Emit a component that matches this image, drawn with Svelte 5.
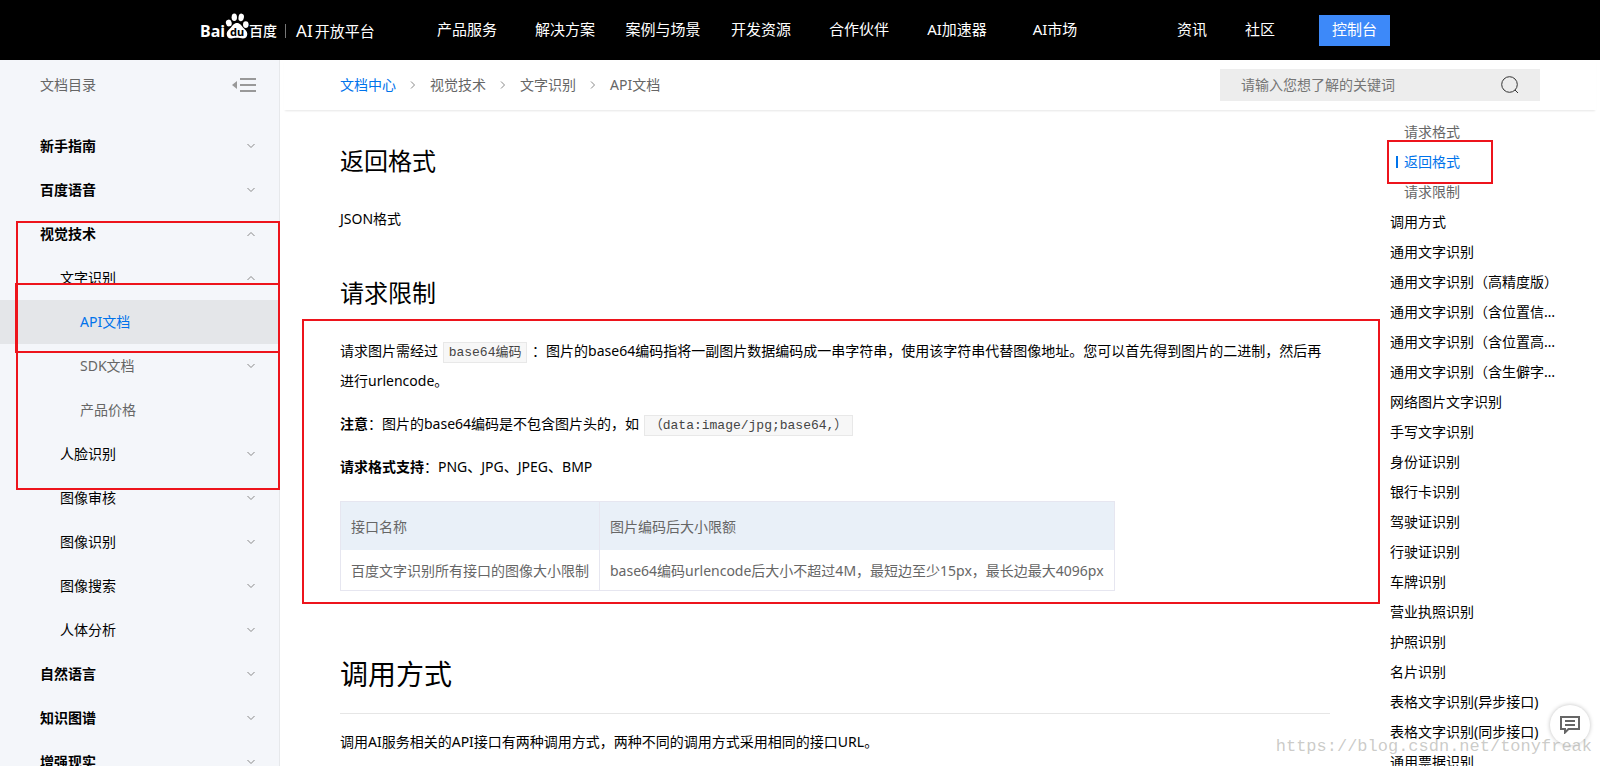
<script lang="ts">
    let keyword = '';
    const nav = ['产品服务', '解决方案', '案例与场景', '开发资源', '合作伙伴', 'AI加速器', 'AI市场'];
    const menu = [
        { name: '新手指南', level: 1, arrow: 'down' },
        { name: '百度语音', level: 1, arrow: 'down' },
        { name: '视觉技术', level: 1, arrow: 'up' },
        { name: '文字识别', level: 2, arrow: 'up' },
        { name: 'API文档', level: 3, arrow: '', active: true },
        { name: 'SDK文档', level: 3, arrow: 'down' },
        { name: '产品价格', level: 3, arrow: '' },
        { name: '人脸识别', level: 2, arrow: 'down' },
        { name: '图像审核', level: 2, arrow: 'down' },
        { name: '图像识别', level: 2, arrow: 'down' },
        { name: '图像搜索', level: 2, arrow: 'down' },
        { name: '人体分析', level: 2, arrow: 'down' },
        { name: '自然语言', level: 1, arrow: 'down' },
        { name: '知识图谱', level: 1, arrow: 'down' },
        { name: '增强现实', level: 1, arrow: 'down' }
    ];
    const crumbs = ['文档中心', '视觉技术', '文字识别', 'API文档'];
    const toc = [
        { name: '请求格式', sub: true },
        { name: '返回格式', sub: true, active: true },
        { name: '请求限制', sub: true },
        { name: '调用方式' },
        { name: '通用文字识别' },
        { name: '通用文字识别（高精度版）' },
        { name: '通用文字识别（含位置信息版）' },
        { name: '通用文字识别（含位置高精度版）' },
        { name: '通用文字识别（含生僻字版）' },
        { name: '网络图片文字识别' },
        { name: '手写文字识别' },
        { name: '身份证识别' },
        { name: '银行卡识别' },
        { name: '驾驶证识别' },
        { name: '行驶证识别' },
        { name: '车牌识别' },
        { name: '营业执照识别' },
        { name: '护照识别' },
        { name: '名片识别' },
        { name: '表格文字识别(异步接口)' },
        { name: '表格文字识别(同步接口)' },
        { name: '通用票据识别' }
    ];
</script>

<div class="page" lang="zh-CN">
    <header>
        <div class="inner">
            <a class="logo" href="#home">
                <span class="bai">Bai</span>
                <svg class="paw" width="24" height="26" viewBox="0 0 24 26">
                    <ellipse cx="3.8" cy="10" rx="2.9" ry="3.4" transform="rotate(-12 3.8 10)" />
                    <ellipse cx="9.3" cy="4.2" rx="2.7" ry="3.8" />
                    <ellipse cx="16.2" cy="4.4" rx="2.7" ry="3.8" transform="rotate(10 16.2 4.4)" />
                    <ellipse cx="20.8" cy="11.6" rx="2.8" ry="3.4" />
                    <path d="M12 10c3 0 4.500 2.500 6 4.500 2 2.200 4.300 3.600 4.300 6.500 0 3-2 4.500-4.500 4.500-2 0-3.500-.7-5.800-.7s-3.800.7-5.800.7C3.700 25.500 1.700 24 1.700 21c0-2.900 2.300-4.300 4.300-6.500C7.500 12.500 9 10 12 10z" />
                    <text x="12" y="23" text-anchor="middle">du</text>
                </svg>
                <span class="du">百度</span>
                <i></i>
                <span class="plat"><b>AI</b>开放平台</span>
            </a>
            <nav>
                {#each nav as n}
                <a href="#nav">{n}</a>
                {/each}
            </nav>
            <div class="right">
                <a href="#news">资讯</a>
                <a href="#bbs">社区</a>
                <button class="console">控制台</button>
            </div>
        </div>
    </header>

    <div class="body">
        <aside>
            <div class="side-head">
                <span>文档目录</span>
                <button class="fold" aria-label="收起">
                    <svg width="24" height="14" viewBox="0 0 24 14">
                        <path d="M0 7l5-4v8z" />
                        <path d="M8 0h16v2H8zM8 6h16v2H8zM8 12h16v2H8z" />
                    </svg>
                </button>
            </div>
            <div class="menu">
                {#each menu as m}
                <a href="#doc" class="item l{m.level}" class:active={m.active}>
                    <span>{m.name}</span>
                    {#if m.arrow}
                    <svg width="8" height="6" viewBox="0 0 8 6">
                        <path d={m.arrow == 'up' ? 'M0.500 5L4 1.500l3.500 3.500' : 'M0.500 1L4 4.500 7.500 1'} />
                    </svg>
                    {/if}
                </a>
                {/each}
                <div class="mark vision"></div>
                <div class="mark api"></div>
            </div>
        </aside>

        <main>
            <div class="bar">
                <div class="crumbs">
                    {#each crumbs as c, i}
                    {#if i}
                    <svg width="6" height="8" viewBox="0 0 6 8"><path d="M1 0.500L4.500 4 1 7.500" /></svg>
                    {/if}
                    <a href="#crumb" class:first={i == 0}>{c}</a>
                    {/each}
                </div>
                <form class="search">
                    <input type="text" aria-label="搜索" placeholder="请输入您想了解的关键词" bind:value={keyword}>
                    <button type="button" aria-label="搜索">
                        <svg width="18" height="18" viewBox="0 0 18 18">
                            <circle cx="8.500" cy="8.500" r="7.800" />
                            <path d="M14 14l3 3" />
                        </svg>
                    </button>
                </form>
            </div>
            <div class="content">
                <article>
                    <h2>返回格式</h2>
                    <p>JSON格式</p>
                    <h2 class="next">请求限制</h2>
                    <div class="limit">
                        <p>请求图片需经过 <code>base64编码</code> ：图片的base64编码指将一副图片数据编码成一串字符串，使用该字符串代替图像地址。您可以首先得到图片的二进制，然后再进行urlencode。</p>
                        <p><strong>注意</strong>：图片的base64编码是不包含图片头的，如 <code>（data:image/jpg;base64,）</code></p>
                        <p><strong>请求格式支持</strong>：PNG、JPG、JPEG、BMP</p>
                        <table>
                            <thead>
                                <tr><th>接口名称</th><th>图片编码后大小限额</th></tr>
                            </thead>
                            <tbody>
                                <tr><td>百度文字识别所有接口的图像大小限制</td><td>base64编码urlencode后大小不超过4M，最短边至少15px，最长边最大4096px</td></tr>
                            </tbody>
                        </table>
                        <div class="mark"></div>
                    </div>
                    <h1>调用方式</h1>
                    <p>调用AI服务相关的API接口有两种调用方式，两种不同的调用方式采用相同的接口URL。</p>
                </article>
                <div class="toc">
                    {#each toc as t}
                    <a href="#toc" class:sub={t.sub} class:active={t.active}>{t.name}</a>
                    {/each}
                    <div class="mark"></div>
                </div>
            </div>
        </main>
    </div>

    <button class="chat" aria-label="反馈">
        <svg width="20" height="18" viewBox="0 0 20 18">
            <path d="M1 1h18v12H8.500L5 16.500V13H1z" />
            <path d="M5 5h10M5 9h10" />
        </svg>
    </button>
    <div class="watermark">https://blog.csdn.net/tonyfreak</div>
</div>

<style>
    :global(body) {
        background-color: #fff;
    }
    .page {
        height: 100vh;
        overflow: hidden;
        display: flex;
        flex-direction: column;
        position: relative;
        font-family: "Noto Sans", "Noto Sans CJK SC", sans-serif;
        font-size: 14px;
        color: #000;
    }
    a {
        color: inherit;
        text-decoration: none;
    }
    button {
        border: 0;
        padding: 0;
        background: none;
        font-family: inherit;
        cursor: pointer;
    }
    header {
        flex: none;
        height: 60px;
        background-color: #000;
        color: #fff;
        font-size: 15px;
    }
    .inner {
        max-width: 1190px;
        height: 60px;
        margin: 0 auto;
        padding-right: 10px;
        display: flex;
        align-items: center;
    }
    .logo {
        width: 218px;
        height: 26px;
        margin-bottom: 8px;
        line-height: 26px;
        display: flex;
        align-items: center;
    }
    .bai {
        font-size: 16px;
        font-weight: 700;
        padding-top: 10px;
    }
    .paw {
        flex: none;
        fill: #fff;
    }
    .paw text {
        fill: #000;
        font-size: 11px;
        font-weight: 700;
    }
    .du {
        font-size: 14px;
        font-weight: 500;
        padding-top: 10px;
    }
    .logo i {
        width: 1px;
        height: 14px;
        margin: 10px 10px 0 8px;
        background-color: #777;
    }
    .plat {
        padding-top: 10px;
    }
    .plat b {
        font-size: 17px;
        font-weight: 400;
        margin-right: 2px;
    }
    nav {
        display: flex;
    }
    nav a, .right a {
        padding-bottom: 4px;
        text-align: center;
    }
    nav a {
        width: 98px;
    }
    .right {
        margin-left: auto;
        display: flex;
        align-items: center;
    }
    .right a {
        width: 68px;
    }
    .console {
        width: 71px;
        height: 31px;
        padding-bottom: 3px;
        margin-left: 25px;
        background-color: #3d89f9;
        color: #fff;
        font-size: 15px;
    }
    .body {
        flex: 1;
        min-height: 0;
        display: flex;
    }
    aside {
        flex: none;
        width: 279px;
        border-right: 1px solid #e6e8eb;
        background-color: #f4f6fa;
    }
    .side-head {
        height: 50px;
        margin-bottom: 14px;
        padding: 0 23px 0 40px;
        display: flex;
        align-items: center;
        justify-content: space-between;
        color: #666;
    }
    .side-head span, .item span, .crumbs a {
        padding-bottom: 2px;
    }
    .fold svg {
        display: block;
        fill: #999;
    }
    .menu {
        position: relative;
    }
    .item {
        height: 44px;
        padding: 0 24px 0 40px;
        display: flex;
        align-items: center;
        justify-content: space-between;
    }
    .item svg, .crumbs svg {
        fill: none;
        stroke: #888;
    }
    .l1 {
        font-weight: 700;
    }
    .l2 {
        padding-left: 60px;
    }
    .l3 {
        padding-left: 80px;
        color: #666;
    }
    .item.active {
        background-color: #e4e6e9;
        color: #0073eb;
    }
    .mark {
        position: absolute;
        border: 2px solid #ed141c;
        box-sizing: border-box;
        pointer-events: none;
    }
    .vision {
        top: 97px;
        left: 16px;
        right: -1px;
        height: 269px;
    }
    .api {
        top: 159px;
        left: 15px;
        right: -1px;
        height: 70px;
    }
    main {
        flex: 1;
        min-width: 0;
    }
    .bar {
        height: 50px;
        margin: 0 4px;
        padding: 0 56px;
        display: flex;
        align-items: center;
        justify-content: space-between;
        box-shadow: 0 2px 2px -1px rgba(0, 0, 0, .1);
    }
    .crumbs {
        display: flex;
        align-items: center;
        gap: 14px;
        color: #666;
    }
    .crumbs .first {
        color: #0073eb;
    }
    .search {
        width: 320px;
        height: 32px;
        background-color: #ededed;
        display: flex;
        align-items: center;
    }
    .search input {
        flex: 1;
        min-width: 0;
        height: 32px;
        padding: 0 0 2px 21px;
        border: 0;
        box-sizing: border-box;
        background: none;
        font-family: inherit;
        font-size: 14px;
    }
    .search input::placeholder {
        color: #757575;
    }
    .search button {
        margin-right: 21px;
    }
    .search svg {
        display: block;
        fill: none;
        stroke: #333;
    }
    .content {
        padding-left: 60px;
        display: flex;
        gap: 60px;
    }
    article {
        flex: 1;
        min-width: 0;
        padding-top: 33px;
    }
    h1, h2 {
        margin: 0;
        font-weight: 400;
    }
    h2 {
        font-size: 24px;
        line-height: 36px;
        margin-bottom: 25px;
    }
    h2.next {
        margin-top: 41px;
    }
    h1 {
        margin-top: 62px;
        padding-bottom: 18px;
        border-bottom: 1px solid #e6e6e6;
        font-size: 28px;
        line-height: 42px;
    }
    p {
        margin: 0;
        line-height: 30px;
    }
    p + p, h1 + p {
        margin-top: 13px;
    }
    code {
        padding: 2px 5px;
        border: 1px solid #e8e8e8;
        margin: 0 1px;
        background-color: #f7f7f7;
        color: #444;
        font-family: "Liberation Mono", "Noto Sans CJK SC", monospace;
        font-size: 13px;
        line-height: 1;
    }
    .limit {
        position: relative;
    }
    .limit .mark {
        top: -17px;
        bottom: -13px;
        left: -38px;
        right: -50px;
    }
    table {
        margin-top: 19px;
        border-collapse: collapse;
        color: #666;
    }
    th, td {
        height: 40px;
        padding: 0 10px;
        border: 1px solid #e6e6f0;
        font-weight: 400;
        text-align: left;
    }
    th {
        height: 48px;
        border-bottom: 0;
        background-color: #e9f0f8;
    }
    td {
        border-top: 0;
    }
    .toc {
        flex: none;
        width: 210px;
        padding-top: 7px;
        position: relative;
    }
    .toc a {
        display: block;
        width: 168px;
        line-height: 30px;
        overflow: hidden;
        text-overflow: ellipsis;
        white-space: nowrap;
    }
    .toc .sub {
        padding-left: 14px;
        color: #666;
    }
    .toc .active {
        color: #0073eb;
        background: linear-gradient(#0073eb, #0073eb) 6px center / 2px 12px no-repeat;
    }
    .toc .mark {
        top: 30px;
        left: -3px;
        width: 106px;
        height: 44px;
    }
    .chat {
        position: absolute;
        right: 10px;
        bottom: 21px;
        width: 40px;
        height: 40px;
        border-radius: 50%;
        background-color: #fff;
        box-shadow: 0 0 4px rgba(0, 0, 0, .25);
        display: flex;
        align-items: center;
        justify-content: center;
    }
    .chat svg {
        fill: none;
        stroke: #666;
        stroke-width: 2;
    }
    .watermark {
        position: absolute;
        right: 8px;
        bottom: 8px;
        color: rgba(160, 160, 155, .55);
        font-family: "Liberation Mono", monospace;
        font-size: 17px;
        line-height: 22px;
    }
</style>
